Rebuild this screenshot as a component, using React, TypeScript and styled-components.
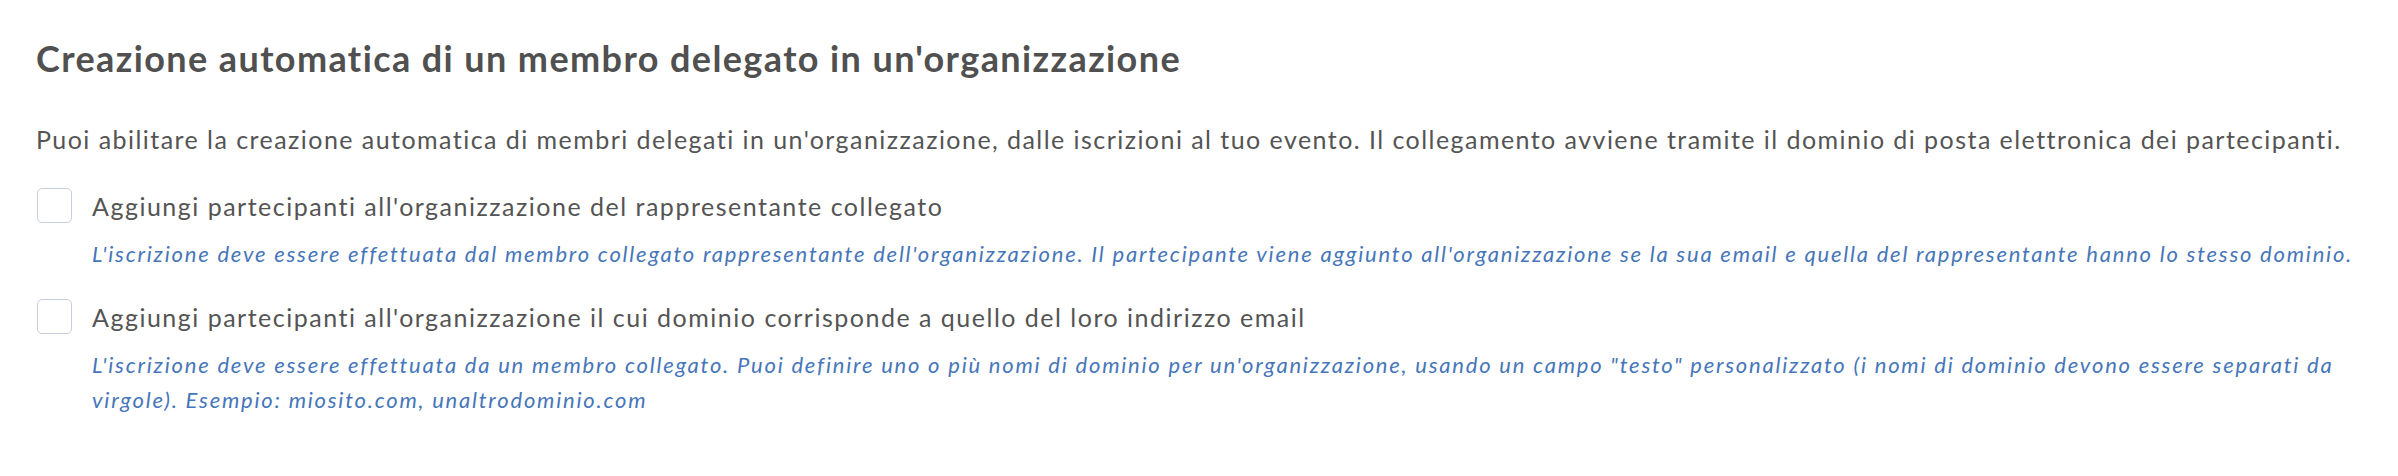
import React from "react";
import styled, { createGlobalStyle } from "styled-components";

const GlobalStyle = createGlobalStyle`
  html, body { margin: 0; padding: 0; background: #ffffff; }
  body { font-family: Lato, "Open Sans", sans-serif; }
`;

const Page = styled.section`
  box-sizing: border-box;
  width: 2398px;
  padding: 36px 36px 0 36px;
  font-family: Lato, "Open Sans", sans-serif;
`;

const Title = styled.h2`
  margin: 0;
  font-size: 36px;
  line-height: 44px;
  font-weight: 700;
  letter-spacing: 1.4px;
  color: #505050;
`;

const Intro = styled.p`
  margin: 41px 0 0 0;
  font-size: 25px;
  line-height: 36px;
  font-weight: 400;
  letter-spacing: 1.45px;
  color: #545454;
`;

const Options = styled.div`
  display: flex;
  flex-direction: column;
  gap: 27px;
  margin-top: 31px;
`;

const Option = styled.label`
  display: grid;
  grid-template-columns: 35px 1fr;
  column-gap: 20px;
  row-gap: 12px;
  padding-left: 1px;
  cursor: pointer;
`;

const Box = styled.span`
  box-sizing: border-box;
  display: block;
  width: 35px;
  height: 35px;
  border: 1.5px solid #c8cedb;
  border-radius: 5px;
  background: #ffffff;
`;

const Label = styled.span`
  font-size: 25px;
  line-height: 36px;
  letter-spacing: 1.5px;
  color: #545454;
`;

const Hint = styled.span`
  display: block;
  grid-column: 2;
  margin: 0;
  font-size: 22px;
  line-height: 35.5px;
  font-style: italic;
  letter-spacing: 1.78px;
  color: #4676b9;
`;

type Item = { label: string; hint: string };

const items: Item[] = [
  {
    label: "Aggiungi partecipanti all'organizzazione del rappresentante collegato",
    hint: "L'iscrizione deve essere effettuata dal membro collegato rappresentante dell'organizzazione. Il partecipante viene aggiunto all'organizzazione se la sua email e quella del rappresentante hanno lo stesso dominio.",
  },
  {
    label: "Aggiungi partecipanti all'organizzazione il cui dominio corrisponde a quello del loro indirizzo email",
    hint: "L'iscrizione deve essere effettuata da un membro collegato. Puoi definire uno o più nomi di dominio per un'organizzazione, usando un campo \"testo\" personalizzato (i nomi di dominio devono essere separati da virgole). Esempio: miosito.com, unaltrodominio.com",
  },
];

export default function App() {
  return (
    <>
      <GlobalStyle />
      <Page>
        <Title>Creazione automatica di un membro delegato in un'organizzazione</Title>
        <Intro>
          Puoi abilitare la creazione automatica di membri delegati in un'organizzazione, dalle iscrizioni al tuo evento.
          Il collegamento avviene tramite il dominio di posta elettronica dei partecipanti.
        </Intro>
        <Options>
          {items.map((it) => (
            <Option key={it.label}>
              <Box role="checkbox" aria-checked="false" />
              <Label>{it.label}</Label>
              <Hint>{it.hint}</Hint>
            </Option>
          ))}
        </Options>
      </Page>
    </>
  );
}
